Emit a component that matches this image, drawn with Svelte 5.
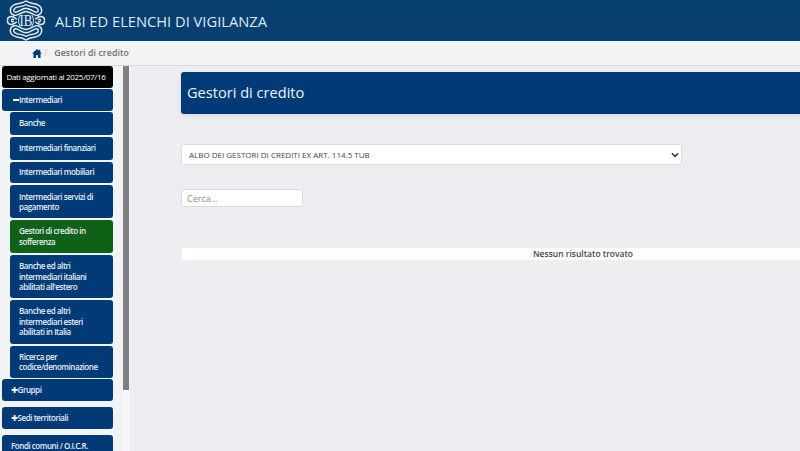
<script lang="ts">
  const voci = [
    { label: 'Banche', kind: 'one' },
    { label: 'Intermediari finanziari', kind: 'one' },
    { label: 'Intermediari mobiliari', kind: 'short' },
    { label: 'Intermediari servizi di pagamento', kind: 'tall' },
    { label: 'Gestori di credito in sofferenza', active: true },
    { label: "Banche ed altri intermediari italiani abilitati all'estero" },
    { label: 'Banche ed altri intermediari esteri abilitati in Italia' },
    { label: 'Ricerca per codice/denominazione' }
  ]
  // the logo is one quarter mirrored around its centre
  const quarti = ['', 'translate(44 0) scale(-1 1)', 'translate(0 41) scale(1 -1)', 'translate(44 41) scale(-1 -1)']
</script>

<div class="page">
  <header class="top">
    <svg class="logo" viewBox="0 0 44 41" width="44" height="41" aria-hidden="true">
      {#each quarti as t}
        <g transform={t} fill="none" stroke="#e6edf3" stroke-width="1.400">
          <path d="M22 .8C18 4.500 13 2.500 9 5.500 5 8.500 5.500 14 10 15.200 14.500 16.300 16.500 12 22 11.500"/>
          <path d="M22 4.500C18.500 7.500 14.500 5.800 11.500 7.800 8.700 9.700 9.500 12.200 11.500 12.200 14.500 12.200 17 8.500 22 8.200"/>
          <path d="M3.500 20.500C3 16.500 7.500 15.500 11 17.800 11.800 18.300 12.300 18.800 12.800 19.400"/>
          <path d="M7.500 20.500C7.500 19 9 19 10 19.800"/>
          <path d="M16.500 14.800C15.200 16 14.600 18 14.600 20.500" stroke-width="1"/>
        </g>
      {/each}
      <text x="22" y="26" text-anchor="middle" class="logo-text" transform="translate(4.400 0) scale(.8 1)">IB</text>
    </svg>
    <span class="brand">ALBI ED ELENCHI DI VIGILANZA</span>
  </header>

  <nav class="crumbs">
    <svg viewBox="0 0 12 11" width="10" height="9" aria-hidden="true">
      <path fill="#003b78" d="M6 0 0 5.500h1.700V11h3V7.500h2.600V11h3V5.500H12L10 3.600V1H8.500v1.200z"/>
    </svg>
    <span class="sep">/</span>
    <span class="here">Gestori di credito</span>
  </nav>

  <div class="body">
    <aside class="side">
      <div class="menu">
        <div class="stamp">Dati aggiornati al 2025/07/16</div>
        <div class="item top-item first"><b class="dash"></b>Intermediari</div>
        <div class="subs">
          {#each voci as v}
            <div class="item sub {v.kind ?? ''}" class:active={v.active}>{v.label}</div>
          {/each}
        </div>
        <div class="item top-item"><b>+</b>Gruppi</div>
        <div class="item top-item spaced"><b>+</b>Sedi territoriali</div>
        <div class="item top-item spaced">Fondi comuni / O.I.C.R.</div>
      </div>
      <div class="track"><div class="thumb"></div></div>
    </aside>

    <main class="main">
      <h1 class="title">Gestori di credito</h1>
      <div class="select">
        <span>ALBO DEI GESTORI DI CREDITI EX ART. 114.5 TUB</span>
        <svg viewBox="0 0 10 7" width="8" height="6" aria-hidden="true">
          <path d="M1 1.200 5 5.200 9 1.200" fill="none" stroke="#333" stroke-width="1.800"/>
        </svg>
      </div>
      <input class="search" placeholder="Cerca..." />
      <div class="empty">Nessun risultato trovato</div>
    </main>
  </div>
</div>

<style>
  :global(body) {
    margin: 0;
    background: #eceef1;
    overflow: hidden;
  }
  .page {
    width: 800px;
    height: 451px;
    display: flex;
    flex-direction: column;
    overflow: hidden;
    font-family: "Open Sans", "Liberation Sans", sans-serif;
  }
  .top {
    height: 41px;
    flex: none;
    display: flex;
    align-items: center;
    gap: 7px;
    padding-left: 4px;
    background: #063f70;
    box-sizing: border-box;
  }
  .logo { flex: none; }
  .logo-text {
    font-family: "Liberation Serif", serif;
    font-size: 16px;
    fill: #e6edf3;
  }
  .brand {
    color: #dfe8f0;
    font-size: 14.700px;
  }
  .crumbs {
    height: 24px;
    flex: none;
    display: flex;
    align-items: center;
    padding-left: 32px;
    background: #f2f3f5;
    border-bottom: 1px solid #d8d9db;
    font-size: 8.750px;
  }
  .sep { color: #c4c4c4; margin: 0 7px 0 2px; }
  .here { color: #6b6f73; font-weight: 600; letter-spacing: 0.1px; }
  .body {
    flex: 1;
    display: flex;
    min-height: 0;
  }
  .side {
    width: 130px;
    flex: none;
    display: flex;
    background: #f2f3f5;
    overflow: hidden;
  }
  .menu {
    width: 111px;
    height: 420px;
    margin-left: 2px;
    flex: none;
    display: flex;
    flex-direction: column;
  }
  .stamp {
    height: 22px;
    flex: none;
    line-height: 22px;
    padding-right: 3px;
    box-sizing: border-box;
    background: #000;
    color: #fff;
    font-size: 8px;
    text-align: center;
    border-radius: 3px;
    white-space: nowrap;
    letter-spacing: -0.3px;
  }
  .item {
    background: #003b78;
    color: #e6edf5;
    font-size: 8px;
    font-weight: 600;
    line-height: 10.400px;
    letter-spacing: -0.45px;
    border-radius: 3px;
    box-sizing: border-box;
    flex: none;
  }
  .top-item {
    height: 22px;
    padding-left: 9px;
    display: flex;
    align-items: center;
    white-space: nowrap;
    margin-top: 1px;
  }
  .top-item b {
    font-size: 12px;
    line-height: 1;
    font-weight: 800;
    color: #fff;
  }
  .dash {
    width: 6px;
    height: 2px;
    margin: 0 0 0 2px;
    background: #fff;
  }
  .spaced { margin-top: 6px; }
  .subs {
    display: flex;
    flex-direction: column;
    gap: 2px;
    margin: 1px 0 0 8px;
  }
  .sub { padding: 6px 8px 6px 9px; }
  .one { height: 23px; }
  .short { height: 21px; padding-top: 5.300px; padding-bottom: 0; }
  .tall { padding-top: 6.500px; }
  .active { background: #0f6118; }
  .track {
    width: 6px;
    margin-left: 10px;
    background: #f8f8f8;
    flex: none;
  }
  .thumb {
    height: 324px;
    background: #7f7f7f;
  }
  .main {
    flex: 1;
    min-width: 0;
    overflow: hidden;
    padding: 6px 0 0 51px;
    background: #eceef1;
  }
  .title {
    margin: 0;
    width: 700px;
    height: 42px;
    line-height: 41px;
    padding-left: 6px;
    box-sizing: border-box;
    background: #003b78;
    color: #eef3f8;
    border-radius: 3px 0 0 3px;
    font-size: 14.600px;
    font-weight: 400;
    box-shadow: 0 2px 5px rgba(0, 0, 0, 0.08);
  }
  .select {
    width: 499px;
    height: 19px;
    margin: 31px 0 0 1px;
    padding: 0 2px 0 7px;
    box-sizing: border-box;
    background: #fff;
    box-shadow: 0 0 2px rgba(0, 0, 0, 0.2);
    display: flex;
    align-items: center;
    justify-content: space-between;
    font-size: 8px;
    color: #444;
  }
  .search {
    display: block;
    width: 122px;
    height: 18px;
    margin: 25px 0 0 0;
    padding: 0 5px;
    box-sizing: border-box;
    border: 1px solid #d9dcdf;
    border-radius: 2px;
    background: #fff;
    font-family: inherit;
    font-size: 9px;
    outline: none;
  }
  .search::placeholder { color: #8a8f94; }
  .empty {
    width: 802px;
    height: 12px;
    line-height: 12px;
    margin: 41px 0 0 1px;
    background: #fff;
    text-align: center;
    color: #444;
    font-size: 8.500px;
    font-weight: 600;
  }
</style>
